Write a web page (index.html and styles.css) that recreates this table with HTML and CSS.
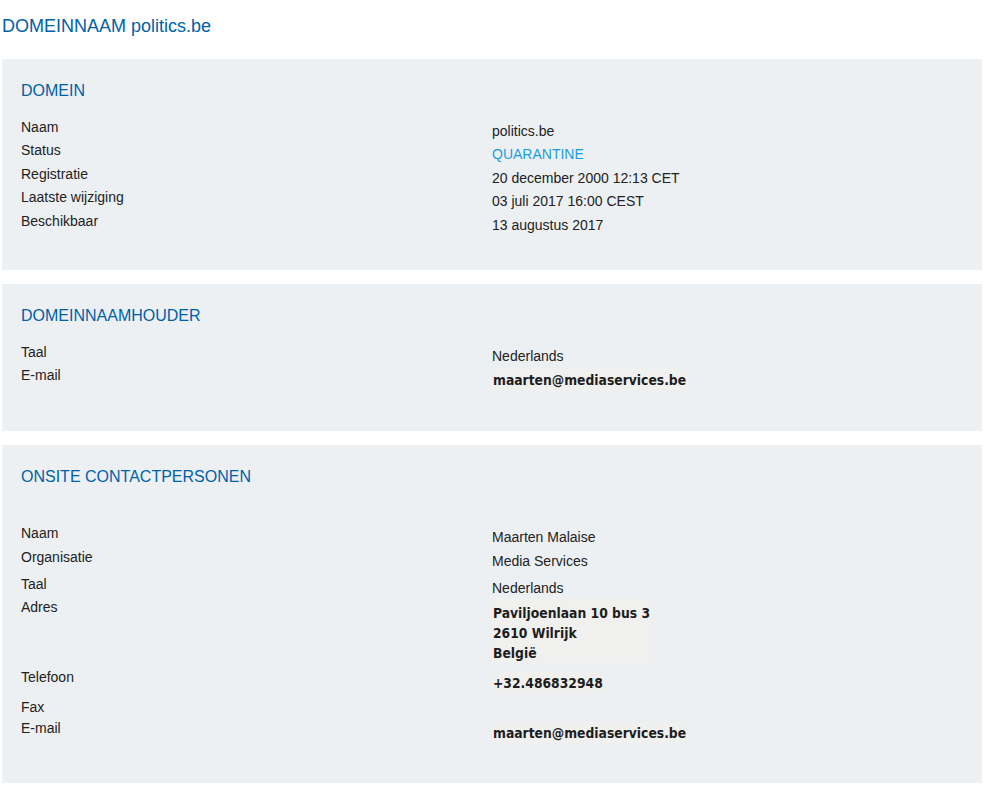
FILE: index.html
```html
<!DOCTYPE html>
<html lang="nl">

<head>
    <meta charset="UTF-8">
    <meta name="viewport" content="width=device-width, initial-scale=1.0">
    <title>DOMEINNAAM politics.be</title>
    <link rel="stylesheet" href="styles.css">
</head>

<body>

    <div class="page">
        <h1 class="page-title">DOMEINNAAM politics.be</h1>

        <!-- Domein -->
        <div class="panel">
            <h2>DOMEIN</h2>
            <div class="details">
                <div class="labels">
                    <div>Naam</div>
                    <div>Status</div>
                    <div>Registratie</div>
                    <div>Laatste wijziging</div>
                    <div>Beschikbaar</div>
                </div>
                <div class="values">
                    <div>politics.be</div>
                    <div class="status">QUARANTINE</div>
                    <div>20 december 2000 12:13 CET</div>
                    <div>03 juli 2017 16:00 CEST</div>
                    <div>13 augustus 2017</div>
                </div>
            </div>
        </div>

        <!-- Domeinnaamhouder -->
        <div class="panel">
            <h2>DOMEINNAAMHOUDER</h2>
            <div class="details">
                <div class="labels">
                    <div>Taal</div>
                    <div>E-mail</div>
                </div>
                <div class="values">
                    <div>Nederlands</div>
                    <pre class="code mail-top">maarten@mediaservices.be</pre>
                </div>
            </div>
        </div>

        <!-- Onsite contactpersonen -->
        <div class="panel">
            <h2 class="spaced">ONSITE CONTACTPERSONEN</h2>
            <div class="details">
                <div class="labels">
                    <div>Naam</div>
                    <div>Organisatie</div>
                    <div class="gap-s">Taal</div>
                    <div>Adres</div>
                    <div class="phone-label">Telefoon</div>
                    <div class="fax-label">Fax</div>
                    <div>E-mail</div>
                </div>
                <div class="values">
                    <div>Maarten Malaise</div>
                    <div>Media Services</div>
                    <div class="gap-s">Nederlands</div>
                    <pre class="code address">Paviljoenlaan 10 bus 3
2610 Wilrijk
België</pre>
                    <pre class="code phone">+32.486832948</pre>
                    <pre class="code mail-bottom">maarten@mediaservices.be</pre>
                </div>
            </div>
        </div>
    </div>

</body>

</html>
```

FILE: styles.css
```css
body {
    margin: 0;
    padding: 0;
    background-color: #fff;
    font-family: "Liberation Sans", Arial, sans-serif;
    font-size: 14px;
    color: #222;
}

.page {
    width: 980px;
    padding: 15px 2px 0;
}

.page-title {
    margin: 0 0 22px;
    font-size: 18px;
    line-height: 22px;
    font-weight: normal;
    color: #0061a8;
}

/* grey blocks */
.panel {
    background-color: #ecf0f3;
    padding: 22px 19px 33px;
    margin-bottom: 14px;
}

.panel h2 {
    margin: 0 0 15px;
    font-size: 16px;
    line-height: 20px;
    font-weight: normal;
    color: #0061a8;
}

.panel h2.spaced {
    margin-bottom: 35px;
}

/* two independent columns: labels / values */
.details {
    display: grid;
    grid-template-columns: 471px 1fr;
}

.labels,
.values {
    display: flex;
    flex-direction: column;
    align-items: flex-start;
}

.labels div,
.values div {
    line-height: 23.4px;
}

.values {
    padding-top: 4px;
}

.status {
    color: #1a9de0;
}

.gap-s {
    margin-top: 3.5px;
}

.phone-label {
    margin-top: 46.5px;
}

.labels .fax-label {
    margin-top: 8px;
    line-height: 20px;
}

/* preformatted values */
.code {
    margin: 0 0 8px;
    padding: 2px 1px 0;
    background-color: #f0f0ef;
    font-family: "DejaVu Sans Condensed", "DejaVu Sans", sans-serif;
    font-stretch: condensed;
    font-weight: bold;
    font-size: 13.75px;
    line-height: 19px;
    color: #1d1d1d;
    white-space: pre;
}

.mail-top {
    margin-top: 1px;
}

.address {
    padding-top: 5px;
    line-height: 20px;
    margin-top: -2px;
    margin-bottom: 0;
}

.phone {
    margin-top: 8.5px;
    margin-bottom: 0;
}

.mail-bottom {
    margin-top: 29px;
    margin-bottom: 7px;
}
```
